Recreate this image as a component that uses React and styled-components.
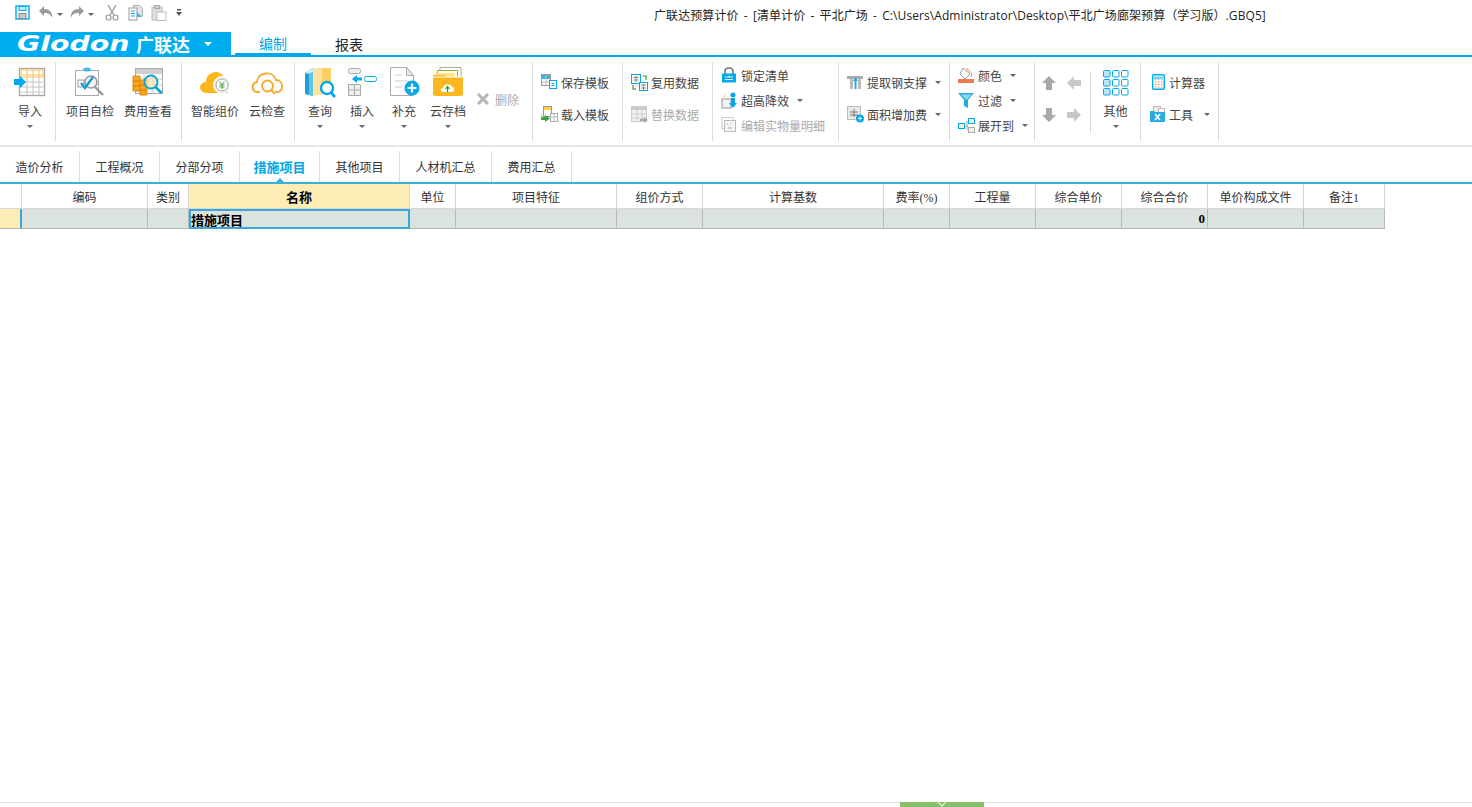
import React from 'react'
import styled, { createGlobalStyle } from 'styled-components'

const GlobalStyle = createGlobalStyle`
  html, body { margin: 0; padding: 0; background: #fff; }
  body { font-family: "Noto Sans CJK SC", "Liberation Sans", sans-serif; color: #333; }
  * { box-sizing: border-box; }
`

const Page = styled.div`
  display: flex;
  flex-direction: column;
  height: 807px;
  overflow: hidden;
`

/* ---------- title bar ---------- */
const TitleBar = styled.div`
  display: flex;
  align-items: center;
  height: 32px;
  padding: 0 0 3px 15px;
`
const Quick = styled.div`
  display: flex;
  align-items: center;
  width: 166px;
  height: 16px;
  margin-top: -3px;
  svg { flex: none; }
`
const Spacer = styled.span`
  flex: none;
  width: ${p => p.$w}px;
`
const TitleText = styled.div`
  margin-left: 473px;
  font-family: "Open Sans", "Noto Sans CJK SC", sans-serif;
  font-size: 12px;
  word-spacing: 2px;
  letter-spacing: .08px;
  color: #222;
  white-space: nowrap;
`

/* ---------- menu row ---------- */
const MenuRow = styled.div`
  display: flex;
  height: 25px;
  border-bottom: 2px solid #00a9ec;
`
const Brand = styled.div`
  display: flex;
  align-items: center;
  width: 231px;
  padding-left: 17px;
  background: #00aeef;
  color: #fff;
`
const BrandLatin = styled.span`
  display: inline-block;
  width: 119px;
  font-family: "DejaVu Sans", sans-serif;
  font-weight: 700;
  font-style: italic;
  font-size: 21px;
  line-height: 22px;
  transform: scaleX(1.35);
  transform-origin: left center;
`
const BrandCn = styled.span`
  width: 68px;
  font-size: 18px;
  font-weight: 700;
  line-height: 22px;
`
const BrandCaret = styled.i`
  display: block;
  width: 0;
  height: 0;
  border-left: 4px solid transparent;
  border-right: 4px solid transparent;
  border-top: 4px solid #fff;
`
const MenuTab = styled.div`
  display: flex;
  align-items: center;
  justify-content: center;
  width: 76px;
  height: 23px;
  font-size: 14px;
  color: ${p => (p.$active ? '#00a6e8' : '#222')};
  border-bottom: ${p => (p.$active ? '2px solid #00a9ec' : '0')};
  margin-left: ${p => (p.$active ? '4px' : '0')};
`

/* ---------- ribbon ---------- */
const Ribbon = styled.div`
  display: flex;
  align-items: flex-start;
  height: 90px;
  padding-top: 5px;
  border-bottom: 2px solid #e6e6e6;
`
const Group = styled.div`
  display: flex;
  flex: none;
  width: ${p => p.$w}px;
  height: 79px;
  padding-left: ${p => p.$pad || 0}px;
  border-right: 1px solid #dcdcdc;
`
const ArrowGroup = styled.div`
  flex: none;
  width: ${p => p.$w}px;
  height: 62px;
  margin-top: 9px;
  border-right: 1px solid #dcdcdc;
  display: grid;
  grid-template-columns: 25px 25px;
  grid-template-rows: 24px 40px;
  padding-left: 1px;
  align-items: center;
  justify-items: center;
`
const LargeBtn = styled.div`
  display: flex;
  flex-direction: column;
  align-items: center;
  flex: none;
  width: ${p => p.$w}px;
  padding-top: 4px;
  font-size: 12px;
  color: #444;
`
const IconSlot = styled.div`
  display: flex;
  align-items: center;
  justify-content: center;
  height: 32px;
  width: 100%;
`
const LargeLabel = styled.div`
  margin-top: 4px;
  line-height: 18px;
  white-space: nowrap;
`
const DownCaret = styled.i`
  display: block;
  width: 0;
  height: 0;
  margin-top: ${p => p.$top ?? 5}px;
  margin-left: ${p => p.$left ?? 0}px;
  border-left: 3px solid transparent;
  border-right: 3px solid transparent;
  border-top: 3px solid #666;
`
const Stack = styled.div`
  display: flex;
  flex-direction: column;
  gap: ${p => p.$gap}px;
  padding-top: ${p => p.$top}px;
`
const SmallBtn = styled.div`
  display: flex;
  align-items: center;
  height: 20px;
  margin-left: ${p => p.$left || 0}px;
  font-size: 12px;
  white-space: nowrap;
  color: ${p => (p.$off ? '#aaa' : '#444')};
  svg { flex: none; margin-right: 3px; }
`

/* ---------- tabs ---------- */
const TabRow = styled.div`
  display: flex;
  align-items: flex-end;
  height: 37px;
  border-bottom: 2px solid #3cb0dc;
`
const Tab = styled.div`
  position: relative;
  display: flex;
  align-items: center;
  justify-content: center;
  width: ${p => p.$w || 80}px;
  height: 31px;
  padding-bottom: 1px;
  font-size: ${p => (p.$active ? 13 : 12)}px;
  font-weight: ${p => (p.$active ? 700 : 400)};
  color: ${p => (p.$active ? '#00a6e8' : '#333')};
  border-right: 1px solid #dedede;
  &::after {
    content: '';
    display: ${p => (p.$active ? 'block' : 'none')};
    position: absolute;
    left: 50%;
    bottom: 0;
    margin-left: -4px;
    border-left: 4px solid transparent;
    border-right: 4px solid transparent;
    border-bottom: 4px solid #3cb0dc;
  }
`

/* ---------- grid ---------- */
const Sheet = styled.div`
  flex: 1;
  font-family: "Liberation Serif", "Noto Sans CJK SC", serif;
  font-size: 12px;
  color: #222;
`
const Row = styled.div`
  display: flex;
  height: ${p => p.$h}px;
`
const HeadCell = styled.div`
  display: flex;
  align-items: center;
  justify-content: center;
  width: ${p => p.$w}px;
  padding-top: 1px;
  background: ${p => (p.$hot ? '#fdedb5' : '#fff')};
  font-size: ${p => (p.$hot ? 13 : 12)}px;
  font-weight: ${p => (p.$hot ? 700 : 400)};
  color: ${p => (p.$hot ? '#000' : '#333')};
  border-right: 1px solid #d8d8d8;
  border-bottom: 1px solid #d8d8d8;
`
const BodyCell = styled.div`
  display: flex;
  align-items: center;
  justify-content: ${p => (p.$right ? 'flex-end' : 'flex-start')};
  width: ${p => p.$w}px;
  padding: 1px 2px 0;
  background: #dae3de;
  font-size: 13px;
  font-weight: 700;
  color: #000;
  border-right: 1px solid #b8b8b8;
  border-bottom: 1px solid #b8b8b8;
`
const RowHead = styled.div`
  width: ${p => p.$w}px;
  background: #fdedb5;
  border-right: 2px solid #3aa8d4;
  border-bottom: 1px solid #b8b8b8;
`
const ActiveCell = styled(BodyCell)`
  border: 2px solid #3aa8d4;
  padding: 1px 0 0;
`

/* ---------- footer ---------- */
const Footer = styled.div`
  display: flex;
  justify-content: center;
  height: 5px;
  border-top: 1px solid #e2e2e2;
`
const Handle = styled.div`
  display: flex;
  justify-content: center;
  width: 84px;
  height: 5px;
  margin: -1px 0 0 412px;
  background: #84c168;
`

/* ---------- icons ---------- */
const S = ({ w, h, children }) => <svg width={w} height={h} viewBox={`0 0 ${w} ${h}`}>{children}</svg>

const Save = () => (
  <S w={16} h={16}>
    <rect x="1" y="1" width="13" height="13" fill="#fff" stroke="#00a9ec" strokeWidth="1.4" />
    <rect x="4" y="1.5" width="7" height="4" fill="#bfe8fa" stroke="#00a9ec" />
    <rect x="4" y="8.5" width="7" height="5" fill="#c8c8c8" stroke="#8a8a8a" />
  </S>
)
const Undo = ({ flip }) => (
  <S w={16} h={16}>
    <path d={flip ? 'M10 1l5 5-5 5V8C6 8 3 9 2 13 1 7 5 4 10 4z' : 'M6 1L1 6l5 5V8c4 0 7 1 8 5 1-6-3-9-8-9z'} fill="#9a9a9a" />
  </S>
)
const Cut = () => (
  <S w={14} h={16}>
    <path d="M3 0l6 10M11 0L5 10" stroke="#9a9a9a" strokeWidth="1.3" />
    <circle cx="3.5" cy="12.5" r="2.5" fill="none" stroke="#9a9a9a" strokeWidth="1.2" />
    <circle cx="10.5" cy="12.5" r="2.5" fill="none" stroke="#9a9a9a" strokeWidth="1.2" />
  </S>
)
const Copy = () => (
  <S w={16} h={16}>
    <path d="M5.5 .5h6l3 3V11h-9z" fill="#e6e6e6" stroke="#aaa" />
    <rect x="1" y="3" width="8" height="12" fill="#fff" stroke="#999" />
    <path d="M3 6h4M3 8.5h4M3 11h4" stroke="#00a9ec" />
    <path d="M9 7l5 5H9z" fill="#00a9ec" opacity=".7" />
  </S>
)
const Paste = () => (
  <S w={16} h={16}>
    <rect x="1" y="2" width="10" height="13" fill="#ddd" stroke="#bbb" />
    <rect x="3.5" y=".5" width="5" height="3" fill="#ccc" stroke="#aaa" />
    <rect x="6" y="7" width="9" height="8.5" fill="#fff" stroke="#bbb" />
  </S>
)
const Customize = () => (
  <S w={6} h={8}>
    <path d="M1 0h4v1.5H1zM0 3h6L3 7z" fill="#555" />
  </S>
)

const ImportIcon = () => (
  <S w={34} h={30}>
    <rect x="6.5" y="1.5" width="25" height="27" fill="#fff" stroke="#aaa" strokeWidth="1.4" />
    <path d="M8 8h22M14 3v7M20 3v7M26 3v7" stroke="#fcc45a" fill="none" />
    <rect x="8" y="3" width="22" height="7" fill="none" stroke="#fcc45a" />
    <path d="M8 15h22M8 20h22M8 25h22M14 10v18M20 10v18M26 10v18" stroke="#c4c4c4" />
    <path d="M1 12h6V9l6 6-6 6v-3H1z" fill="#00a9ec" />
  </S>
)
const CheckIcon = () => (
  <S w={32} h={30}>
    <rect x="1.5" y="3.5" width="23" height="25" fill="#fff" stroke="#aaa" />
    <ellipse cx="13" cy="2.5" rx="4" ry="2" fill="#4bb9e6" />
    <rect x="4" y="13" width="6" height="7" fill="#fff" stroke="#999" />
    <circle cx="17" cy="15" r="6" fill="#f3f3f3" stroke="#999" strokeWidth="1.6" />
    <path d="M21 20l8 8" stroke="#999" strokeWidth="2.4" />
    <path d="M7 16l4 5 8-11" fill="none" stroke="#0f9fd8" strokeWidth="2.4" />
  </S>
)
const FeeIcon = () => (
  <S w={32} h={30}>
    <rect x="3.5" y="1.5" width="27" height="25" fill="#fff" stroke="#aaa" />
    <rect x="4" y="2" width="26" height="5" fill="#cfcfcf" />
    <path d="M4 12h26M4 18h26M12 7v19M21 7v19" stroke="#c8c8c8" />
    <path d="M1 9h7v5H1zM1 14h7v5H1zM1 19h7v5H1z" fill="#f6a623" stroke="#e08a10" />
    <path d="M8 13h7v5H8zM8 18h7v5H8zM8 23h7v5H8z" fill="#f6a623" stroke="#e08a10" />
    <circle cx="19" cy="15" r="6.5" fill="#fde2b0" fillOpacity=".75" stroke="#0aa5de" strokeWidth="2" />
    <path d="M23.5 20l6 6" stroke="#0aa5de" strokeWidth="2.6" />
  </S>
)
const CloudPrice = () => (
  <S w={34} h={30}>
    <path d="M9 26c-9 0-9-11-1-11 0-11 15-14 19-3 2 1 3 1 3 2v12z" fill="#fbb81e" />
    <circle cx="24" cy="18" r="8.5" fill="#eee" stroke="#fff" />
    <circle cx="24" cy="18" r="6" fill="#fff" stroke="#aaa" />
    <path d="M21.5 14.5l2.5 3 2.5-3M24 17.5V22M21.5 18h5M21.5 20h5" stroke="#4aa53d" fill="none" />
  </S>
)
const CloudCheck = () => (
  <S w={34} h={30}>
    <path d="M10 25H8c-7 0-7-9-1-10 0-10 16-12 19-2 8 0 8 12 1 12h-2" fill="none" stroke="#f9a825" strokeWidth="1.8" />
    <circle cx="17.5" cy="19" r="5.5" fill="#fff" stroke="#f9a825" strokeWidth="1.8" />
    <path d="M21.5 23l3 4" stroke="#f9a825" strokeWidth="2" />
  </S>
)
const QueryIcon = () => (
  <S w={32} h={32}>
    <path d="M1 7l8-3v26l-8-2z" fill="#1b9fd4" />
    <path d="M5 5.5l4-1.500v26l-4-1z" fill="#5fc3ea" />
    <path d="M1 7l8-5 4 2-8 3.5z" fill="#d9eef7" stroke="#9fcfe2" strokeWidth=".6" />
    <path d="M9 4l5-2h13v25l-18 3z" fill="#fde3a0" />
    <path d="M18 2h9v25l-9 1.5z" fill="#fbcf62" />
    <circle cx="23" cy="22" r="6" fill="#fff" stroke="#00a9ec" strokeWidth="2.4" />
    <path d="M27 26.5l4 4.5" stroke="#00a9ec" strokeWidth="2.8" />
  </S>
)
const InsertIcon = () => (
  <S w={32} h={30}>
    <rect x="2.5" y="1.5" width="12" height="5" rx="2" fill="#eee" stroke="#aaa" />
    <rect x="18.5" y="9.5" width="12" height="5" rx="2" fill="#fff" stroke="#00a9ec" />
    <path d="M6 12l5-4v2.5h5v3h-5V16z" fill="#00a9ec" />
    <path d="M2.5 17.5h12v11h-12zM2.5 23h12M8.5 17.5v11" fill="#eee" stroke="#aaa" />
  </S>
)
const SupplyIcon = () => (
  <S w={32} h={32}>
    <path d="M2.5 1.5h16l7 8v20h-23z" fill="#fff" stroke="#aaa" />
    <path d="M18.5 1.5v8h7z" fill="#e8e8e8" stroke="#aaa" />
    <path d="M7 9h7M7 15h12M7 21h7" stroke="#ddd" strokeWidth="1.6" />
    <circle cx="24" cy="22" r="7.5" fill="#00a9ec" />
    <path d="M24 17.5v9M19.5 22h9" stroke="#fff" strokeWidth="2.2" />
  </S>
)
const ArchiveIcon = () => (
  <S w={32} h={32}>
    <path d="M8 1.5h21v18H8z" fill="#fff" stroke="#aaa" />
    <path d="M5.5 4.5h20v14h-20z" fill="#fff" stroke="#8ab81e" />
    <rect x="3" y="7" width="20" height="10" fill="#fde58a" />
    <path d="M1 9h11l2 2h17v17c0 1-1 2-2 2H3c-1 0-2-1-2-2z" fill="#fbb81e" />
    <path d="M1 11h30" stroke="#fff" />
    <path d="M11 26c-3 0-3-4 0-4 0-4 8-5 9-1 3 0 3 5 0 5z" fill="#fff" />
    <path d="M15.5 26v-5M13.5 23l2-2.5 2 2.5" stroke="#1aa51a" fill="none" strokeWidth="1.2" />
  </S>
)
const DelIcon = () => (
  <S w={16} h={14}>
    <path d="M2 2l10 10M12 2L2 12" stroke="#b5b5b5" strokeWidth="3" />
  </S>
)
const TplSave = () => (
  <S w={17} h={16}>
    <rect x=".5" y=".5" width="9" height="11" fill="#fff" stroke="#999" />
    <rect x="1" y="1" width="8" height="4" fill="#39b5e8" />
    <path d="M1 8h8M5 1v11" stroke="#bbb" />
    <rect x="8.5" y="6.5" width="7" height="8" fill="#fff" stroke="#00a9ec" />
    <path d="M10.5 9.5h3M10.5 11.5h3" stroke="#00a9ec" />
  </S>
)
const TplLoad = () => (
  <S w={17} h={16}>
    <rect x="2.5" y=".5" width="8" height="10" fill="#fff" stroke="#999" />
    <rect x="3" y="1" width="7" height="3" fill="#f9cf3e" />
    <rect x="9.5" y="7.5" width="7" height="8" fill="#fff" stroke="#aaa" />
    <path d="M9.5 11h7M13 7.5v8" stroke="#bbb" />
    <path d="M1 6v5h3V9l5 3.5-5 3.5v-2H0z" fill="#3aa53a" />
  </S>
)
const Reuse = () => (
  <S w={17} h={17}>
    <rect x=".5" y=".5" width="9" height="9" fill="#fff" stroke="#00a9ec" />
    <path d="M2.5 3.5h5M2.5 6h5M5 2v6" stroke="#888" />
    <rect x="8.5" y="8.5" width="8" height="8" fill="#fff" stroke="#00a9ec" />
    <path d="M10 11h5M10 14h5M12.5 10v6" stroke="#888" />
    <path d="M12 2h3v4M2 11v4h3" stroke="#5ab04a" fill="none" strokeWidth="1.4" />
  </S>
)
const Replace = () => (
  <S w={17} h={17}>
    <rect x=".5" y=".5" width="15" height="15" fill="#f2f2f2" stroke="#ccc" />
    <rect x="1" y="1" width="14" height="3" fill="#ccc" />
    <path d="M1 8h14M1 12h14M6 4v12M11 4v12" stroke="#ccc" />
    <path d="M9 13h4v-2l4 3-4 3v-2H9z" fill="#aaa" />
  </S>
)
const Lock = () => (
  <S w={17} h={16}>
    <path d="M4 7V4c0-4 8-4 8 0v3" fill="none" stroke="#777" strokeWidth="1.6" />
    <rect x="1" y="6.5" width="14" height="9" fill="#00a9ec" />
    <path d="M4 10h8M4 12.5h8M8 8.5v2" stroke="#fff" strokeOpacity=".85" />
  </S>
)
const Raise = () => (
  <S w={17} h={17}>
    <rect x="1" y="7" width="9" height="9" fill="#f2f2f2" stroke="#999" />
    <path d="M1 7l4-5" stroke="#f3a71e" strokeDasharray="1.5 1.5" />
    <circle cx="12" cy="3" r="2.5" fill="#00a9ec" />
    <path d="M10 6h4v5h2l-4 5-4-5h2z" fill="#00a9ec" />
  </S>
)
const Detail = () => (
  <S w={17} h={16}>
    <rect x="1" y=".5" width="11" height="11" fill="#fff" stroke="#ccc" />
    <rect x="3.5" y="3.5" width="11" height="11" fill="#f5f5f5" stroke="#bbb" />
    <path d="M6 7h1M9 7h1M7 11h4" stroke="#aaa" />
  </S>
)
const Steel = () => (
  <S w={17} h={16}>
    <path d="M0 2h16v3H0z" fill="#aaa" />
    <path d="M3 5h3v10H3zM11 5h3v10h-3z" fill="#bbb" />
    <path d="M8.5 3l2.5 4H9.5v8h-2V7H6z" fill="#29abe2" />
  </S>
)
const Area = () => (
  <S w={17} h={17}>
    <rect x=".5" y=".5" width="13" height="13" fill="#e8e8e8" stroke="#bbb" />
    <path d="M3 6h8M3 9h8M7 3v8" stroke="#777" />
    <circle cx="13" cy="12.5" r="4" fill="#00a9ec" />
    <path d="M13 10.500v4M11 12.5h4" stroke="#fff" />
  </S>
)
const Bucket = () => (
  <S w={17} h={16}>
    <path d="M5 1l7 6-5 5-5-5z" fill="#fff" stroke="#999" />
    <path d="M9 1l5 5v4h-1V6L8 2z" fill="#f2a03a" />
    <rect x="0" y="12" width="16" height="4" fill="#f07850" />
  </S>
)
const Funnel = () => (
  <S w={17} h={16}>
    <path d="M0 1h16l-6 7v8l-4-2V8z" fill="#29abe2" />
    <path d="M2.5 2.5h11l-5 5.5z" fill="#8fd6f2" />
  </S>
)
const Expand = () => (
  <S w={17} h={15}>
    <rect x="10.5" y=".5" width="6" height="5" fill="#f5edd8" stroke="#00a9ec" />
    <rect x=".5" y="5.5" width="6" height="5" fill="#f5edd8" stroke="#00a9ec" />
    <rect x="10.5" y="9.5" width="6" height="5" fill="#f0f0f0" stroke="#aaa" />
    <path d="M7 8h3M9 3v9" stroke="#aaa" />
  </S>
)
const Arrow = ({ dir, light }) => {
  const r = { up: 0, right: 90, down: 180, left: 270 }[dir]
  return (
    <S w={16} h={16}>
      <path d="M8 1l7 7h-4v7H5V8H1z" fill={light ? '#c8c8c8' : '#a8a8a8'} transform={`rotate(${r} 8 8)`} />
    </S>
  )
}
const Apps = () => {
  const cells = []
  for (let r = 0; r < 3; r++) {
    for (let c = 0; c < 3; c++) {
      cells.push(
        <rect key={`${r}-${c}`} x={0.5 + c * 9} y={3.5 + r * 9} width="6.5" height="6.5" rx="1" fill={c === 0 ? '#bfe3f3' : '#fff'} stroke="#00a9ec" />
      )
    }
  }
  return <S w={26} h={30}>{cells}</S>
}
const Calc = () => (
  <S w={13} h={16}>
    <rect x=".7" y=".7" width="11.6" height="14.6" rx="1" fill="#fff" stroke="#00a9ec" strokeWidth="1.4" />
    <rect x="2" y="2.5" width="9" height="3" fill="#7fd0ee" />
    <path d="M3 8h1.500M6 8h1.500M9 8h1.500M3 10.500h1.500M6 10.500h1.500M9 10.500h1.500M3 13h1.500M6 13h1.500M9 13h1.500" stroke="#f07850" />
  </S>
)
const Tools = () => (
  <S w={16} h={16}>
    <rect x="3.5" y=".5" width="7" height="7" fill="#f5edd8" stroke="#bbb" />
    <rect x="8.5" y="2.5" width="6" height="6" fill="#fff" stroke="#bbb" />
    <path d="M0 5h4l1 1h10v10H0z" fill="#29abe2" />
    <path d="M5 8l5 6M10 8l-5 6" stroke="#fff" strokeWidth="1.6" />
  </S>
)

const columns = [
  { w: 126, t: '编码' },
  { w: 41, t: '类别' },
  { w: 221, t: '名称', hot: true },
  { w: 46, t: '单位' },
  { w: 161, t: '项目特征' },
  { w: 86, t: '组价方式' },
  { w: 181, t: '计算基数' },
  { w: 66, t: '费率(%)' },
  { w: 86, t: '工程量' },
  { w: 86, t: '综合单价' },
  { w: 86, t: '综合合价', val: '0' },
  { w: 96, t: '单价构成文件' },
  { w: 81, t: '备注1' },
]

const tabs = ['造价分析', '工程概况', '分部分项', '措施项目', '其他项目', '人材机汇总', '费用汇总']

function Large({ w, icon, label, caret }) {
  return (
    <LargeBtn $w={w}>
      <IconSlot>{icon}</IconSlot>
      <LargeLabel>{label}</LargeLabel>
      {caret && <DownCaret />}
    </LargeBtn>
  )
}

export default function App() {
  return (
    <Page>
      <GlobalStyle />
      <TitleBar>
        <Quick>
          <Save />
          <Spacer $w={7} />
          <Undo />
          <DownCaret $top={2} $left={3} />
          <Spacer $w={6} />
          <Undo flip />
          <DownCaret $top={2} $left={3} />
          <Spacer $w={11} />
          <Cut />
          <Spacer $w={9} />
          <Copy />
          <Spacer $w={7} />
          <Paste />
          <Spacer $w={9} />
          <Customize />
        </Quick>
        <TitleText>广联达预算计价 - [清单计价 - 平北广场 - C:\Users\Administrator\Desktop\平北广场廊架预算（学习版）.GBQ5]</TitleText>
      </TitleBar>

      <MenuRow>
        <Brand>
          <BrandLatin>Glodon</BrandLatin>
          <BrandCn>广联达</BrandCn>
          <BrandCaret />
        </Brand>
        <MenuTab $active>编制</MenuTab>
        <MenuTab>报表</MenuTab>
      </MenuRow>

      <Ribbon>
        <Group $w={56} $pad={8}>
          <Large w={44} icon={<ImportIcon />} label="导入" caret />
        </Group>
        <Group $w={126} $pad={6}>
          <Large w={56} icon={<CheckIcon />} label="项目自检" />
          <Large w={60} icon={<FeeIcon />} label="费用查看" />
        </Group>
        <Group $w={113} $pad={5}>
          <Large w={56} icon={<CloudPrice />} label="智能组价" />
          <Large w={48} icon={<CloudCheck />} label="云检查" />
        </Group>
        <Group $w={238} $pad={4}>
          <Large w={42} icon={<QueryIcon />} label="查询" caret />
          <Large w={42} icon={<InsertIcon />} label="插入" caret />
          <Large w={42} icon={<SupplyIcon />} label="补充" caret />
          <Large w={46} icon={<ArchiveIcon />} label="云存档" caret />
          <Stack $gap={0} $top={27}>
            <SmallBtn $off $left={5}><DelIcon />删除</SmallBtn>
          </Stack>
        </Group>
        <Group $w={90} $pad={8}>
          <Stack $gap={12} $top={10}>
            <SmallBtn><TplSave />保存模板</SmallBtn>
            <SmallBtn><TplLoad />载入模板</SmallBtn>
          </Stack>
        </Group>
        <Group $w={90} $pad={8}>
          <Stack $gap={12} $top={10}>
            <SmallBtn><Reuse />复用数据</SmallBtn>
            <SmallBtn $off><Replace />替换数据</SmallBtn>
          </Stack>
        </Group>
        <Group $w={126} $pad={8}>
          <Stack $gap={5} $top={3}>
            <SmallBtn><Lock />锁定清单</SmallBtn>
            <SmallBtn><Raise />超高降效<DownCaret $top={0} $left={8} /></SmallBtn>
            <SmallBtn $off><Detail />编辑实物量明细</SmallBtn>
          </Stack>
        </Group>
        <Group $w={111} $pad={8}>
          <Stack $gap={12} $top={10}>
            <SmallBtn><Steel />提取钢支撑<DownCaret $top={0} $left={8} /></SmallBtn>
            <SmallBtn><Area />面积增加费<DownCaret $top={0} $left={8} /></SmallBtn>
          </Stack>
        </Group>
        <Group $w={85} $pad={8}>
          <Stack $gap={5} $top={3}>
            <SmallBtn><Bucket />颜色<DownCaret $top={0} $left={8} /></SmallBtn>
            <SmallBtn><Funnel />过滤<DownCaret $top={0} $left={8} /></SmallBtn>
            <SmallBtn><Expand />展开到<DownCaret $top={0} $left={8} /></SmallBtn>
          </Stack>
        </Group>
        <ArrowGroup $w={56}>
          <Arrow dir="up" />
          <Arrow dir="left" light />
          <Arrow dir="down" />
          <Arrow dir="right" light />
        </ArrowGroup>
        <Group $w={50}>
          <Large w={49} icon={<Apps />} label="其他" caret />
        </Group>
        <Group $w={78} $pad={9}>
          <Stack $gap={12} $top={10}>
            <SmallBtn><Spacer $w={2} /><Calc /><Spacer $w={1} />计算器</SmallBtn>
            <SmallBtn><Tools />工具<DownCaret $top={0} $left={11} /></SmallBtn>
          </Stack>
        </Group>
      </Ribbon>

      <TabRow>
        {tabs.map((t, i) => (
          <Tab key={t} $active={i === 3} $w={i === 5 ? 92 : 80}>{t}</Tab>
        ))}
      </TabRow>

      <Sheet>
        <Row $h={25}>
          <HeadCell $w={22} />
          {columns.map(c => (
            <HeadCell key={c.t} $w={c.w} $hot={c.hot}>{c.t}</HeadCell>
          ))}
        </Row>
        <Row $h={20}>
          <RowHead $w={22} />
          {columns.map(c =>
            c.hot ? (
              <ActiveCell key={c.t} $w={c.w}>措施项目</ActiveCell>
            ) : (
              <BodyCell key={c.t} $w={c.w} $right={!!c.val}>{c.val}</BodyCell>
            )
          )}
        </Row>
      </Sheet>

      <Footer>
        <Handle>
          <svg width="10" height="5" viewBox="0 0 10 5"><path d="M1 0l4 4 4-4" fill="none" stroke="#d8edcf" strokeWidth="1.4" /></svg>
        </Handle>
      </Footer>
    </Page>
  )
}
